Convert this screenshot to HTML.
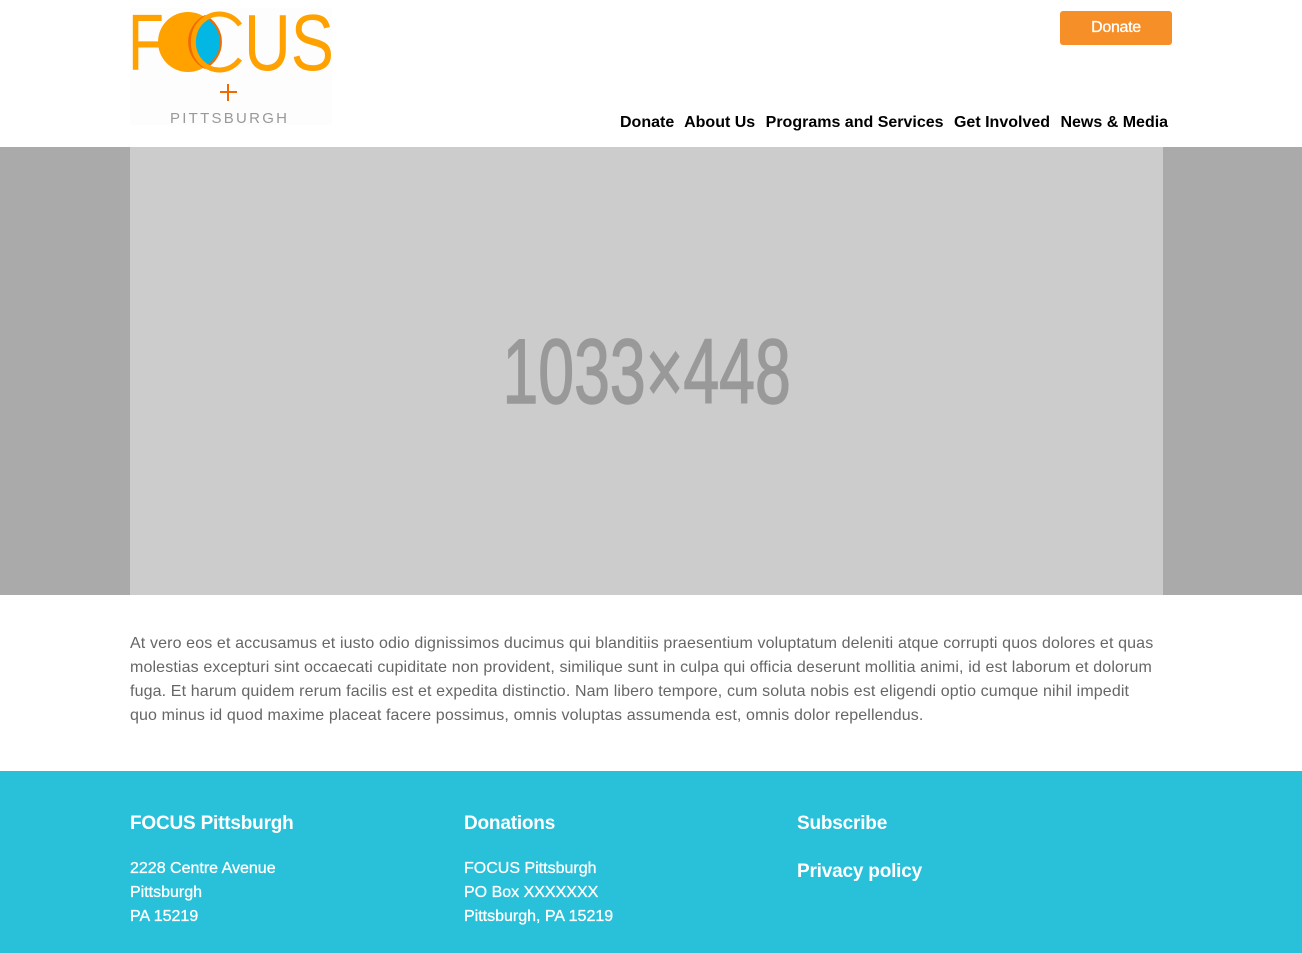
<!DOCTYPE html>
<html><head><meta charset="utf-8"><style>
*{margin:0;padding:0;box-sizing:border-box}
body{width:1302px;height:953px;overflow:hidden;font-family:"Liberation Sans",Arial,sans-serif;background:#fff;position:relative}
.btn{position:absolute;left:1060px;top:11px;width:112px;height:34px;background:#f78f28;border-radius:3px;color:#fff;font-size:16px;text-align:center;line-height:34px;letter-spacing:-0.3px;-webkit-text-stroke:0.3px #fff}
.nav{position:absolute;top:114px;left:620px;font-size:16px;font-weight:bold;color:#000;white-space:nowrap;letter-spacing:0}
.nav span{margin-right:6px}
.hero{position:absolute;top:147px;left:0;width:1302px;height:448px;background:#aaa}
.hero .in{position:absolute;left:130px;top:0;width:1033px;height:448px;background:#ccc}
.ph{position:absolute;left:0;width:1033px;top:180px;text-align:center;font-size:92px;color:#999;transform:scaleX(0.7);transform-origin:517px 0;line-height:90px;-webkit-text-stroke:1.5px #999}
.txt{position:absolute;left:130px;top:632px;width:1032px;font-size:16px;line-height:24px;color:#666;letter-spacing:0.13px}
.foot{position:absolute;top:771px;left:0;width:1302px;height:182px;background:#29c0da;color:#fff}
.col{position:absolute;top:42px}
.col h3{font-size:19px;font-weight:bold;letter-spacing:-0.2px;line-height:22px;margin-bottom:22px}
.col h3.pp{margin-top:26px}
.col p{font-size:16px;line-height:24px;-webkit-text-stroke:0.3px #fff;letter-spacing:0}
</style></head><body>
<svg style="position:absolute;left:125px;top:5px" width="215" height="125" viewBox="125 5 215 125">
<rect x="130" y="8" width="202" height="117" fill="#fdfdfd"/>
<circle cx="188" cy="42" r="30" fill="#ffa200"/>
<path d="M205 15 A30 30 0 0 1 205 69 A30 30 0 0 1 205 15Z" fill="#f06a00"/>
<path d="M207 19 A27 27 0 0 1 207 65 A27 27 0 0 1 207 19Z" fill="#03b7e4"/>
<text x="128" y="70" font-family="Liberation Sans,sans-serif" font-size="80" fill="#ffa200" textLength="36" lengthAdjust="spacingAndGlyphs">F</text>
<path d="M240 25 A26 28 0 1 0 240 59" fill="none" stroke="#ffa200" stroke-width="5"/>
<text x="244" y="70" font-family="Liberation Sans,sans-serif" font-size="80" fill="#ffa200" textLength="90" lengthAdjust="spacingAndGlyphs">US</text>
<path d="M228 84v17M220 92h17" stroke="#f06a00" stroke-width="2"/>
<text x="170" y="123" font-family="Liberation Sans,sans-serif" font-size="15" fill="#999" textLength="117" lengthAdjust="spacing">PITTSBURGH</text>
</svg>
<div class="btn">Donate</div>
<div class="nav"><span>Donate</span> <span>About Us</span> <span>Programs and Services</span> <span>Get Involved</span> <span style="margin:0">News &amp; Media</span></div>
<div class="hero"><div class="in"><div class="ph">1033×448</div></div></div>
<div class="txt">At vero eos et accusamus et iusto odio dignissimos ducimus qui blanditiis praesentium voluptatum deleniti atque corrupti quos dolores et quas molestias excepturi sint occaecati cupiditate non provident, similique sunt in culpa qui officia deserunt mollitia animi, id est laborum et dolorum fuga. Et harum quidem rerum facilis est et expedita distinctio. Nam libero tempore, cum soluta nobis est eligendi optio cumque nihil impedit<br>quo minus id quod maxime placeat facere possimus, omnis voluptas assumenda est, omnis dolor repellendus.</div>
<div class="foot">
<div class="col" style="left:130px"><h3>FOCUS Pittsburgh</h3><p>2228 Centre Avenue<br>Pittsburgh<br>PA 15219</p></div>
<div class="col" style="left:464px"><h3>Donations</h3><p>FOCUS Pittsburgh<br>PO Box XXXXXXX<br>Pittsburgh, PA 15219</p></div>
<div class="col" style="left:797px"><h3>Subscribe</h3><h3 class="pp">Privacy policy</h3></div>
</div>
</body></html>
